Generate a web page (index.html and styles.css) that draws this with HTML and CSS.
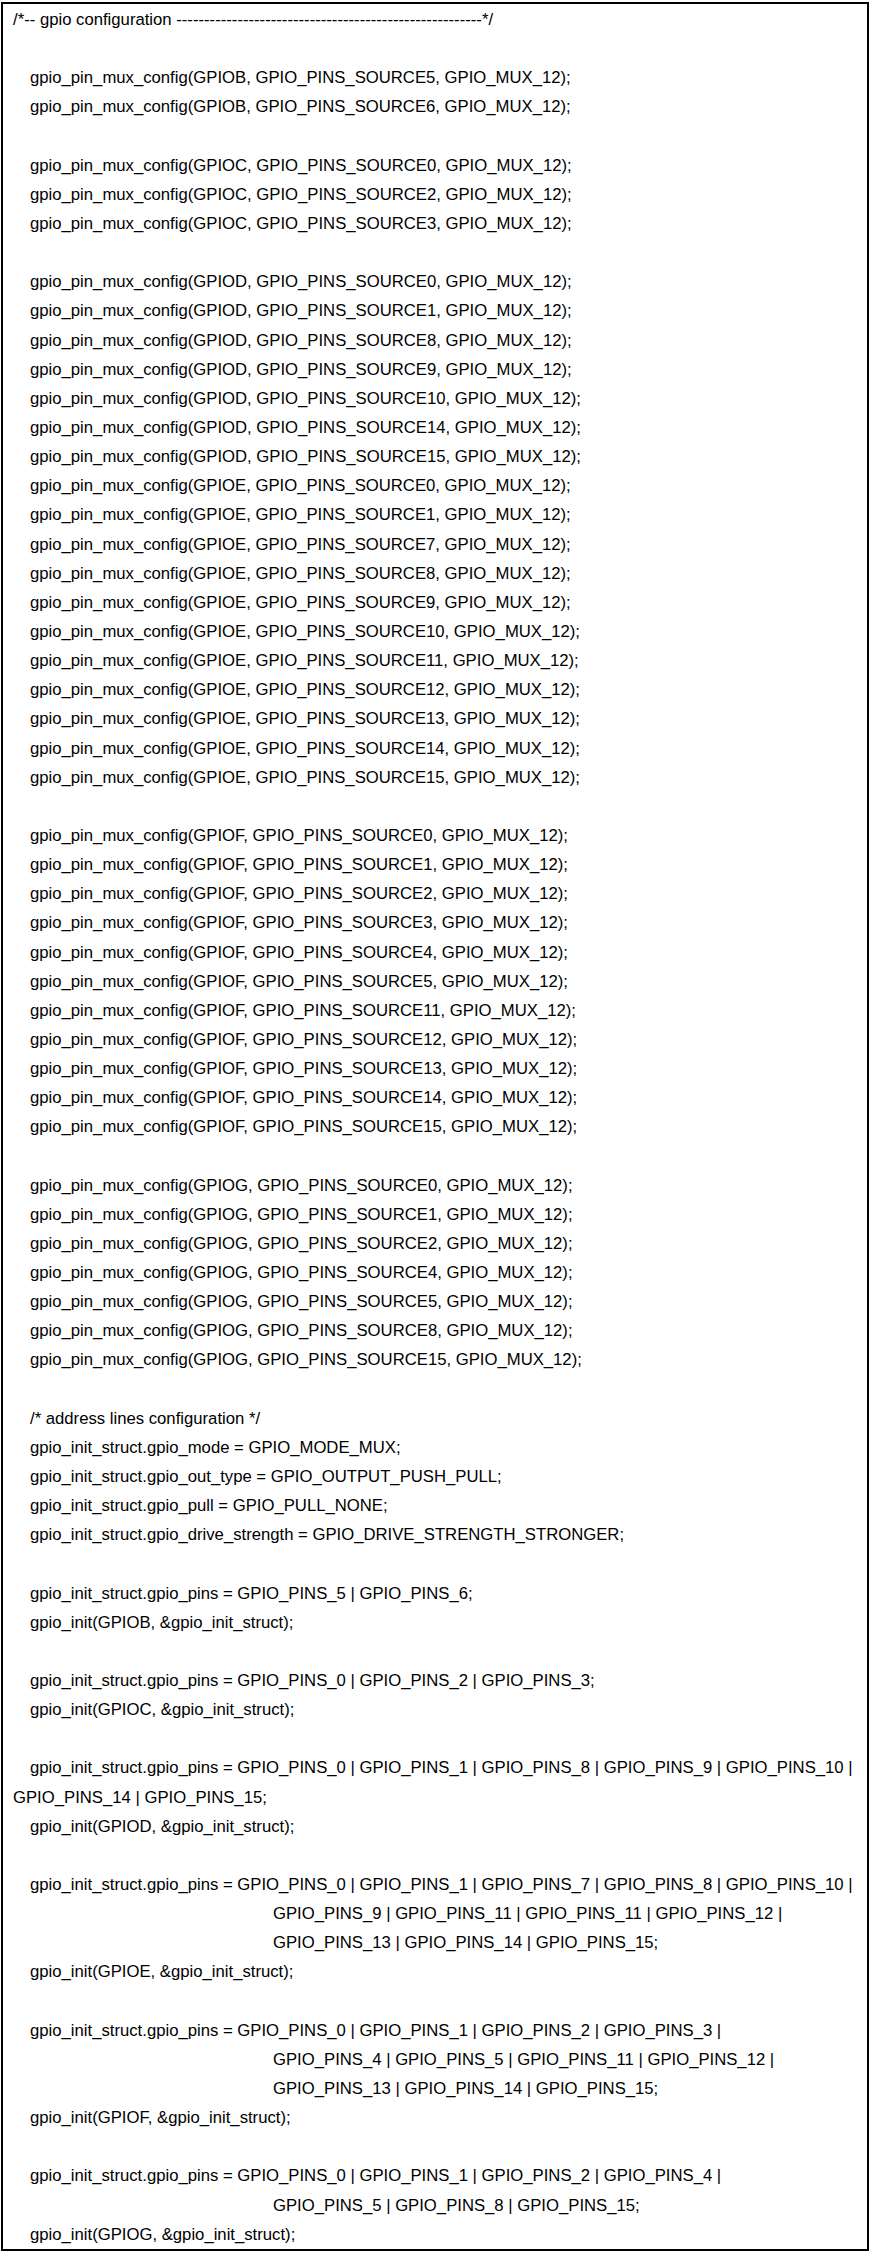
FILE: index.html
```html
<!DOCTYPE html>
<html lang="en">
	<head>
		<meta charset="UTF-8" />
		<meta name="viewport" content="width=device-width, initial-scale=1.0" />
		<title>gpio configuration</title>
		<link rel="stylesheet" href="styles.css">
	</head>
	<body>
		<div class="code">
			<p>/*-- gpio configuration -------------------------------------------------------*/</p>
			<p class="gap"></p>
			<p class="ind">gpio_pin_mux_config(GPIOB, GPIO_PINS_SOURCE5, GPIO_MUX_12);</p>
			<p class="ind">gpio_pin_mux_config(GPIOB, GPIO_PINS_SOURCE6, GPIO_MUX_12);</p>
			<p class="gap"></p>
			<p class="ind">gpio_pin_mux_config(GPIOC, GPIO_PINS_SOURCE0, GPIO_MUX_12);</p>
			<p class="ind">gpio_pin_mux_config(GPIOC, GPIO_PINS_SOURCE2, GPIO_MUX_12);</p>
			<p class="ind">gpio_pin_mux_config(GPIOC, GPIO_PINS_SOURCE3, GPIO_MUX_12);</p>
			<p class="gap"></p>
			<p class="ind">gpio_pin_mux_config(GPIOD, GPIO_PINS_SOURCE0, GPIO_MUX_12);</p>
			<p class="ind">gpio_pin_mux_config(GPIOD, GPIO_PINS_SOURCE1, GPIO_MUX_12);</p>
			<p class="ind">gpio_pin_mux_config(GPIOD, GPIO_PINS_SOURCE8, GPIO_MUX_12);</p>
			<p class="ind">gpio_pin_mux_config(GPIOD, GPIO_PINS_SOURCE9, GPIO_MUX_12);</p>
			<p class="ind">gpio_pin_mux_config(GPIOD, GPIO_PINS_SOURCE10, GPIO_MUX_12);</p>
			<p class="ind">gpio_pin_mux_config(GPIOD, GPIO_PINS_SOURCE14, GPIO_MUX_12);</p>
			<p class="ind">gpio_pin_mux_config(GPIOD, GPIO_PINS_SOURCE15, GPIO_MUX_12);</p>
			<p class="ind">gpio_pin_mux_config(GPIOE, GPIO_PINS_SOURCE0, GPIO_MUX_12);</p>
			<p class="ind">gpio_pin_mux_config(GPIOE, GPIO_PINS_SOURCE1, GPIO_MUX_12);</p>
			<p class="ind">gpio_pin_mux_config(GPIOE, GPIO_PINS_SOURCE7, GPIO_MUX_12);</p>
			<p class="ind">gpio_pin_mux_config(GPIOE, GPIO_PINS_SOURCE8, GPIO_MUX_12);</p>
			<p class="ind">gpio_pin_mux_config(GPIOE, GPIO_PINS_SOURCE9, GPIO_MUX_12);</p>
			<p class="ind">gpio_pin_mux_config(GPIOE, GPIO_PINS_SOURCE10, GPIO_MUX_12);</p>
			<p class="ind">gpio_pin_mux_config(GPIOE, GPIO_PINS_SOURCE11, GPIO_MUX_12);</p>
			<p class="ind">gpio_pin_mux_config(GPIOE, GPIO_PINS_SOURCE12, GPIO_MUX_12);</p>
			<p class="ind">gpio_pin_mux_config(GPIOE, GPIO_PINS_SOURCE13, GPIO_MUX_12);</p>
			<p class="ind">gpio_pin_mux_config(GPIOE, GPIO_PINS_SOURCE14, GPIO_MUX_12);</p>
			<p class="ind">gpio_pin_mux_config(GPIOE, GPIO_PINS_SOURCE15, GPIO_MUX_12);</p>
			<p class="gap"></p>
			<p class="ind">gpio_pin_mux_config(GPIOF, GPIO_PINS_SOURCE0, GPIO_MUX_12);</p>
			<p class="ind">gpio_pin_mux_config(GPIOF, GPIO_PINS_SOURCE1, GPIO_MUX_12);</p>
			<p class="ind">gpio_pin_mux_config(GPIOF, GPIO_PINS_SOURCE2, GPIO_MUX_12);</p>
			<p class="ind">gpio_pin_mux_config(GPIOF, GPIO_PINS_SOURCE3, GPIO_MUX_12);</p>
			<p class="ind">gpio_pin_mux_config(GPIOF, GPIO_PINS_SOURCE4, GPIO_MUX_12);</p>
			<p class="ind">gpio_pin_mux_config(GPIOF, GPIO_PINS_SOURCE5, GPIO_MUX_12);</p>
			<p class="ind">gpio_pin_mux_config(GPIOF, GPIO_PINS_SOURCE11, GPIO_MUX_12);</p>
			<p class="ind">gpio_pin_mux_config(GPIOF, GPIO_PINS_SOURCE12, GPIO_MUX_12);</p>
			<p class="ind">gpio_pin_mux_config(GPIOF, GPIO_PINS_SOURCE13, GPIO_MUX_12);</p>
			<p class="ind">gpio_pin_mux_config(GPIOF, GPIO_PINS_SOURCE14, GPIO_MUX_12);</p>
			<p class="ind">gpio_pin_mux_config(GPIOF, GPIO_PINS_SOURCE15, GPIO_MUX_12);</p>
			<p class="gap"></p>
			<p class="ind">gpio_pin_mux_config(GPIOG, GPIO_PINS_SOURCE0, GPIO_MUX_12);</p>
			<p class="ind">gpio_pin_mux_config(GPIOG, GPIO_PINS_SOURCE1, GPIO_MUX_12);</p>
			<p class="ind">gpio_pin_mux_config(GPIOG, GPIO_PINS_SOURCE2, GPIO_MUX_12);</p>
			<p class="ind">gpio_pin_mux_config(GPIOG, GPIO_PINS_SOURCE4, GPIO_MUX_12);</p>
			<p class="ind">gpio_pin_mux_config(GPIOG, GPIO_PINS_SOURCE5, GPIO_MUX_12);</p>
			<p class="ind">gpio_pin_mux_config(GPIOG, GPIO_PINS_SOURCE8, GPIO_MUX_12);</p>
			<p class="ind">gpio_pin_mux_config(GPIOG, GPIO_PINS_SOURCE15, GPIO_MUX_12);</p>
			<p class="gap"></p>
			<p class="ind">/* address lines configuration */</p>
			<p class="ind">gpio_init_struct.gpio_mode = GPIO_MODE_MUX;</p>
			<p class="ind">gpio_init_struct.gpio_out_type = GPIO_OUTPUT_PUSH_PULL;</p>
			<p class="ind">gpio_init_struct.gpio_pull = GPIO_PULL_NONE;</p>
			<p class="ind">gpio_init_struct.gpio_drive_strength = GPIO_DRIVE_STRENGTH_STRONGER;</p>
			<p class="gap"></p>
			<p class="ind">gpio_init_struct.gpio_pins = GPIO_PINS_5 | GPIO_PINS_6;</p>
			<p class="ind">gpio_init(GPIOB, &amp;gpio_init_struct);</p>
			<p class="gap"></p>
			<p class="ind">gpio_init_struct.gpio_pins = GPIO_PINS_0 | GPIO_PINS_2 | GPIO_PINS_3;</p>
			<p class="ind">gpio_init(GPIOC, &amp;gpio_init_struct);</p>
			<p class="gap"></p>
			<p class="ind">gpio_init_struct.gpio_pins = GPIO_PINS_0 | GPIO_PINS_1 | GPIO_PINS_8 | GPIO_PINS_9 | GPIO_PINS_10 |</p>
			<p>GPIO_PINS_14 | GPIO_PINS_15;</p>
			<p class="ind">gpio_init(GPIOD, &amp;gpio_init_struct);</p>
			<p class="gap"></p>
			<p class="ind">gpio_init_struct.gpio_pins = GPIO_PINS_0 | GPIO_PINS_1 | GPIO_PINS_7 | GPIO_PINS_8 | GPIO_PINS_10 |</p>
			<p class="cont">GPIO_PINS_9 | GPIO_PINS_11 | GPIO_PINS_11 | GPIO_PINS_12 |</p>
			<p class="cont">GPIO_PINS_13 | GPIO_PINS_14 | GPIO_PINS_15;</p>
			<p class="ind">gpio_init(GPIOE, &amp;gpio_init_struct);</p>
			<p class="gap"></p>
			<p class="ind">gpio_init_struct.gpio_pins = GPIO_PINS_0 | GPIO_PINS_1 | GPIO_PINS_2 | GPIO_PINS_3 |</p>
			<p class="cont">GPIO_PINS_4 | GPIO_PINS_5 | GPIO_PINS_11 | GPIO_PINS_12 |</p>
			<p class="cont">GPIO_PINS_13 | GPIO_PINS_14 | GPIO_PINS_15;</p>
			<p class="ind">gpio_init(GPIOF, &amp;gpio_init_struct);</p>
			<p class="gap"></p>
			<p class="ind">gpio_init_struct.gpio_pins = GPIO_PINS_0 | GPIO_PINS_1 | GPIO_PINS_2 | GPIO_PINS_4 |</p>
			<p class="cont">GPIO_PINS_5 | GPIO_PINS_8 | GPIO_PINS_15;</p>
			<p class="ind">gpio_init(GPIOG, &amp;gpio_init_struct);</p>
		</div>
	</body>
</html>
```

FILE: styles.css
```css
* {
	margin: 0;
	padding: 0;
	box-sizing: border-box;
}

body {
	background-color: #fff;
	color: #000;
	font-family: 'Liberation Sans', Arial, sans-serif;
	font-size: 16.7px;
}

.code {
	margin: 2px 2px 0 1px;
	border: 2px solid #000;
	padding: 1px 0 0 10px;
	line-height: 29.15px;
}

.code p {
	white-space: nowrap;
	height: 29.15px;
}

.ind {
	padding-left: 17px;
}

.cont {
	padding-left: 260px;
}
```
